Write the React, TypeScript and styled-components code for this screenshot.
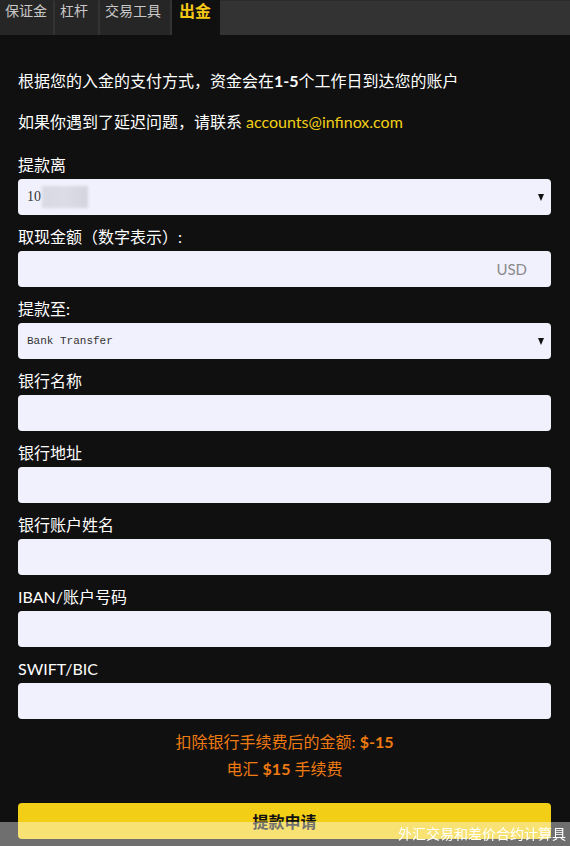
import React from "react";
import styled, { createGlobalStyle } from "styled-components";

const Global = createGlobalStyle`
  html, body { margin: 0; padding: 0; background: #101010; }
  body { font-family: "Lato", "Noto Sans CJK SC", sans-serif; color: #fff; }
  * { box-sizing: border-box; }
`;

const Page = styled.div`
  min-height: 846px;
  background: #101010;
  padding-bottom: 6px;
`;

const TabBar = styled.div`
  display: flex;
  height: 35px;
  background: #333;
  border-top: 1px solid #2b2b2b;
`;

const Tab = styled.div<{ $active?: boolean; $w: number }>`
  width: ${(p) => p.$w}px;
  margin-right: 2px;
  margin-top: -1px;
  height: 35px;
  background: ${(p) => (p.$active ? "#101010" : "#262626")};
  color: ${(p) => (p.$active ? "#f5c816" : "#c8c8c8")};
  font-weight: ${(p) => (p.$active ? 700 : 400)};
  font-size: ${(p) => (p.$active ? "16px" : "14px")};
  line-height: 22px;
  padding: 0 0 0 ${(p) => (p.$active ? 7 : 5)}px;
  white-space: nowrap;
`;

const Body = styled.div`
  padding: 35px 19px 0 18px;
`;

const Intro = styled.div`
  display: flex;
  flex-direction: column;
  gap: 19px;
  margin-bottom: 21px;
`;

const Para = styled.div`
  font-size: 16px;
  line-height: 22px;
  white-space: nowrap;
`;

const Strong = styled.b`
  font-weight: 700;
`;

const Mail = styled.span`
  color: #f2cf16;
`;

const Field = styled.div`
  margin-bottom: 11px;
`;

const Label = styled.div`
  font-size: 16px;
  line-height: 22px;
  margin-bottom: 3px;
  white-space: nowrap;
`;

const Box = styled.div`
  position: relative;
  height: 36px;
  background: #f1f1fd;
  border-radius: 4px;
  display: flex;
  align-items: center;
  padding: 0 24px 0 9px;
`;

const SelectText = styled.span<{ $mono?: boolean }>`
  font-family: ${(p) =>
    p.$mono ? '"Liberation Mono", "DejaVu Sans Mono", monospace' : '"Liberation Serif", serif'};
  font-size: ${(p) => (p.$mono ? "11px" : "14px")};
  color: #333;
`;

const Redact = styled.span`
  display: inline-block;
  width: 46px;
  height: 22px;
  margin-left: 1px;
  background: linear-gradient(90deg, #d9d9e4 0%, #dcdce6 50%, #d4d4df 100%);
  filter: blur(1.5px);
`;

const Arrow = styled.span`
  position: absolute;
  right: 7px;
  top: 15px;
  width: 0;
  height: 0;
  border-left: 3.5px solid transparent;
  border-right: 3.5px solid transparent;
  border-top: 7px solid #111;
`;

const Unit = styled.span`
  margin-left: auto;
  color: #8a8a8a;
  font-family: "Lato", sans-serif;
  font-size: 15px;
`;

const Notes = styled.div`
  margin-top: -2px;
  text-align: center;
  color: #ee7a12;
  font-size: 16px;
  line-height: 27px;
`;

const Button = styled.button`
  display: block;
  width: 100%;
  height: 36px;
  margin-top: 21px;
  border: none;
  border-radius: 4px;
  background: #f2cf16;
  color: #111;
  font-family: "Lato", "Noto Sans CJK SC", sans-serif;
  font-weight: 700;
  font-size: 16px;
  cursor: pointer;
`;

const Footer = styled.div`
  position: fixed;
  left: 0;
  right: 0;
  bottom: 0;
  height: 24px;
  background: rgba(255, 255, 255, 0.4);
  color: #fff;
  font-size: 14px;
  line-height: 24px;
  text-align: right;
  padding-right: 4px;
  white-space: nowrap;
`;

const tabs = [
  { t: "保证金", w: 53 },
  { t: "杠杆", w: 43 },
  { t: "交易工具", w: 70 },
  { t: "出金", w: 48, active: true },
];

const fields = ["银行名称", "银行地址", "银行账户姓名", "IBAN/账户号码", "SWIFT/BIC"];

export default function App() {
  return (
    <Page>
      <Global />
      <TabBar>
        {tabs.map((t) => (
          <Tab key={t.t} $w={t.w} $active={t.active}>
            {t.t}
          </Tab>
        ))}
      </TabBar>
      <Body>
        <Intro>
          <Para>
            根据您的入金的支付方式，资金会在<Strong>1-5</Strong>个工作日到达您的账户
          </Para>
          <Para>
            如果你遇到了延迟问题，请联系 <Mail>accounts@infinox.com</Mail>
          </Para>
        </Intro>
        <Field>
          <Label>提款离</Label>
          <Box>
            <SelectText>10</SelectText>
            <Redact />
            <Arrow />
          </Box>
        </Field>
        <Field>
          <Label>取现金额（数字表示）:</Label>
          <Box>
            <Unit>USD</Unit>
          </Box>
        </Field>
        <Field>
          <Label>提款至:</Label>
          <Box>
            <SelectText $mono>Bank Transfer</SelectText>
            <Arrow />
          </Box>
        </Field>
        {fields.map((f) => (
          <Field key={f}>
            <Label>{f}</Label>
            <Box />
          </Field>
        ))}
        <Notes>
          <div>
            扣除银行手续费后的金额: <Strong>$-15</Strong>
          </div>
          <div>
            电汇 <Strong>$15</Strong> 手续费
          </div>
        </Notes>
        <Button>提款申请</Button>
      </Body>
      <Footer>外汇交易和差价合约计算具</Footer>
    </Page>
  );
}
